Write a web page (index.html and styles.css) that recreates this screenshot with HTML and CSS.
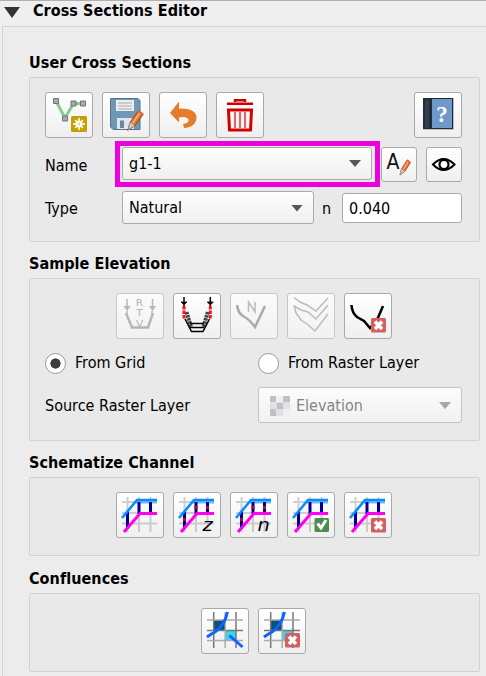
FILE: index.html
```html
<!DOCTYPE html>
<html lang="en">
<head>
<meta charset="utf-8">
<title>Cross Sections Editor</title>
<link rel="stylesheet" href="styles.css">
</head>
<body>
<svg class="defs" aria-hidden="true">
  <defs>
    <g id="pencil">
      <path d="M0 17 2 10 9 0 13 3 6 13Z" fill="#e07828" stroke="#a94e20"/>
      <path d="M4 11 10 2" stroke="#ffad70" stroke-width="1.5"/>
      <path d="M0 17 2 10 6 13Z" fill="#d9cec5" stroke="#8c8580" stroke-width=".7"/>
      <path d="M9 0 13 3" stroke="#d66b52" stroke-width="2"/>
    </g>
    <g id="delete">
      <rect x="27" y="25" width="15" height="14.500" rx="1.500" fill="#d35f5f"/>
      <path d="M31 28.500 38 36M38 28.500 31 36" stroke="#fff" stroke-width="3.500"/>
    </g>
    <g id="channel" fill="none">
      <path d="M11.500 5V40M23 5V40M34.500 5V40M6 10H41M6 21H41M6 31.500H41" stroke="#999" stroke-opacity=".45" stroke-width="2"/>
      <path d="M20 9.500H41" stroke="#72bdf0" stroke-width="4"/>
      <path d="M11.500 19V37M23 10V22M34.500 10V22" stroke="#000096" stroke-width="3"/>
      <path d="M6 26 21 8H41" stroke="#078cff" stroke-width="2.600"/>
      <path d="M8 40 24 21.500H41" stroke="#ff00f0" stroke-width="3"/>
    </g>
    <path id="samples" d="M11.500 26V29M23 14V17M34.500 14V17" stroke="#d00018" stroke-width="3"/>
    <g id="confluence" fill="none">
      <path d="M13 12H24V22H13Z" fill="#075477"/>
      <path d="M24 22H35V32H24Z" fill="#35d8ed"/>
      <path d="M12.700 4V40M6 22.500H42M35 4V40" stroke="#777" stroke-width="1.500"/>
      <path d="M24.200 4V40M6 12H42M6 32.500H42" stroke="#aaa" stroke-width="1.500"/>
      <path d="M26.500 4C25 11 21 19 14 24Q10 26 6 29" stroke="#0c63ff" stroke-width="3"/>
    </g>
  </defs>
</svg>
<main class="panel">
  <header class="panel-header"><span class="collapse"></span><h1>Cross Sections Editor</h1></header>
  <div class="panel-body">
    <section>
      <h2>User Cross Sections</h2>
      <div class="group user-group">
        <div class="toolbar">
          <button class="tool"><svg viewBox="1 1 46 44"><path d="M11 9 20 26 28.500 11.500H38" fill="none" stroke="#84cf8b" stroke-width="3"/><g fill="#aaa" stroke="#737373"><path d="M8.500 6.500h5v5h-5zM17.500 24h5v5h-5zM26 9h5v5h-5zM35.500 9h5v5h-5z"/></g><rect x="26" y="24" width="16" height="16" rx="1.500" fill="#c4a000"/><circle cx="34" cy="32" r="3.500" fill="#fff"/><path d="M34 26V38M28 32H40M30 28 38 36M38 28 30 36" stroke="#fff" stroke-width="1.500"/><circle cx="34" cy="32" r="1.300" fill="#f6d94c"/></svg></button>
          <button class="tool"><svg viewBox="1 1 46 44"><path d="M9 6.500H36L38 8.500V37.500H11L8.500 35V6.500Z" fill="#6f98b4" stroke="#507590"/><path d="M14 8H32V19H14Z" fill="#eee"/><path d="M16 11H30M16 14H30M16 17H30" stroke="#aaa"/><path d="M15 26H32V37H15Z" fill="#e3e6e8"/><path d="M18 28.500H22V36H18Z" fill="#6189a8"/><use href="#pencil" transform="translate(26 19) scale(1.150 1.120)"/></svg></button>
          <button class="tool"><svg viewBox="1 1 46 44"><path d="M11 21 20 9.500V16.500C32 16 38 20 37.500 26C37 32 33 35.500 25 36L24 32C30 31 31 28 28 26Q26 24.500 20 25.500V30.500Z" fill="#e47c2a"/></svg></button>
          <button class="tool"><svg viewBox="1 1 46 44"><path d="M11 11.700H37M19 10V8.200H29V10" fill="none" stroke="#d40000" stroke-width="2.500"/><path d="M12.500 18H35.500L34.500 38H13.500Z" fill="#fff" stroke="#d40000" stroke-width="3"/><path d="M19 20V36M24 20V36M29 20V36" stroke="#df6868" stroke-width="2.300"/></svg></button>
          <button class="tool help"><svg viewBox="1 1 46 44"><path d="M11 6H40V38H9Z" fill="#bbb"/><path d="M9 6H39V37H9Z" fill="#252a39"/><path d="M11 7.500H15V36H11Z" fill="#2d4050"/><path d="M18 7H38V36H18Z" fill="#6d9aca"/><text x="28" y="30" text-anchor="middle" class="question">?</text></svg></button>
        </div>
        <div class="name-row">
          <label>Name</label>
          <div class="highlight"><div class="combo name-combo">g1-1<i class="arrow"></i></div></div>
          <button class="small-tool rename"><svg viewBox="1 1 34 33"><text x="5.500" y="21.500" class="letter">A</text><use href="#pencil" transform="translate(19 13) scale(.8 .88)"/></svg></button>
          <button class="small-tool"><svg viewBox="1 1 34 33"><path d="M7 17.500Q17.500 6.500 28.500 17.500Q17.500 28.500 7 17.500Z" fill="#fff" stroke="#000" stroke-width="2"/><circle cx="18" cy="17.500" r="4.500" fill="#fff" stroke="#000" stroke-width="2.200"/></svg></button>
        </div>
        <div class="type-row"><label>Type</label><div class="combo type-combo">Natural<i class="arrow"></i></div><label class="n-label">n</label><input value="0.040" aria-label="n"></div>
      </div>
    </section>
    <section>
      <h2>Sample Elevation</h2>
      <div class="group sample-group">
        <div class="toolbar centered">
          <button class="tool disabled"><svg viewBox="1 1 46 44"><g fill="none" stroke="#b6b6b6"><path d="M11 6V17M36.500 6V17" stroke-width="1.500"/><path d="M7.500 13H14.500L11 18ZM33 13H40L36.500 18Z" fill="#b6b6b6" stroke="none"/><path d="M10 20 16 34.500H32L37 20" stroke-width="2.500"/><path d="M11 18V21M36 18V21" stroke="#dfbcbc" stroke-width="2"/></g><g class="rtv" text-anchor="middle"><text transform="translate(23.500 12.500) scale(1.300 1)">R</text><text transform="translate(23.500 23) scale(1.300 1)">T</text><text transform="translate(23.500 33.500) scale(1.300 1)">V</text></g></svg></button>
          <button class="tool"><svg viewBox="1 1 46 44"><g fill="none" stroke="#222"><path d="M11 4V14M37.300 4V14" stroke="#000" stroke-width="1.500"/><path d="M8 9H14L11 12ZM34.300 9H40.300L37.300 12Z" fill="#000"/><path d="M11 13V26M37.300 13V26" stroke="#f11" stroke-width="3" stroke-dasharray="3.500 1"/><path d="M13.500 19 18 34M34.800 19 30.500 34" stroke="#444" stroke-width="4" stroke-dasharray="2.500 .7"/><path d="M12 26 18.500 38.500H30L36.500 26M17 30.500H31M17 34.500H31" stroke="#000" stroke-width="1.500"/></g></svg></button>
          <button class="tool disabled"><svg viewBox="1 1 46 44"><path d="M7 12Q8 20 13 23Q19 26 25 34L35 13" fill="none" stroke="#aaa" stroke-width="2.500"/><path d="M18.500 19V9L25 19V9" fill="none" stroke="#bbb" stroke-width="1.500"/></svg></button>
          <button class="tool disabled"><svg viewBox="1 1 46 44"><path d="M7 4.500 13 9 20 12 29 18 41 5M7 13 14 17 21 19 29 26 41 12M7 12 9 20 14 27 20 31 28 38 41 21" fill="none" stroke="#bbb" stroke-width="1.500"/></svg></button>
          <button class="tool"><svg viewBox="1 1 46 44"><path d="M7.500 12Q8 20 13 24L20 28 26 35 33 27 39 13" fill="none" stroke="#000" stroke-width="2.500"/><use href="#delete"/></svg></button>
        </div>
        <div class="radio-row"><label class="radio"><span class="circle selected"></span>From Grid</label><label class="radio"><span class="circle"></span>From Raster Layer</label></div>
        <div class="source-row"><label>Source Raster Layer</label><div class="combo source-combo"><svg class="raster" viewBox="0 0 20 20"><path fill="#e1e1e5" d="M0 0H20V20H0Z"/><path fill="#c1c1c3" d="M0 0H6V6H0ZM13 0H20V6H13ZM7 7H13V13H7ZM0 13H6V20H0Z"/><path fill="#f0f0f2" d="M6 0H13V6H6ZM13 13H20V20H13Z"/></svg>Elevation<i class="arrow"></i></div></div>
      </div>
    </section>
    <section>
      <h2>Schematize Channel</h2>
      <div class="group button-group">
        <div class="toolbar centered">
          <button class="tool"><svg viewBox="1 1 46 44"><use href="#channel"/></svg></button>
          <button class="tool"><svg viewBox="1 1 46 44"><use href="#channel"/><use href="#samples"/><text class="variable" transform="translate(29.500 38.500) scale(1.200 1)">z</text></svg></button>
          <button class="tool"><svg viewBox="1 1 46 44"><use href="#channel"/><use href="#samples"/><text class="variable" transform="translate(27.500 38.500) scale(1.200 1)">n</text></svg></button>
          <button class="tool"><svg viewBox="1 1 46 44"><use href="#channel"/><rect x="27.500" y="26" width="14.500" height="14" rx="1.500" fill="#4b8b50"/><path d="M30.500 31.500 34 36 39 28" fill="none" stroke="#fff" stroke-width="3"/></svg></button>
          <button class="tool"><svg viewBox="1 1 46 44"><use href="#channel"/><use href="#delete" y="1"/></svg></button>
        </div>
      </div>
    </section>
    <section>
      <h2>Confluences</h2>
      <div class="group button-group">
        <div class="toolbar centered">
          <button class="tool"><svg viewBox="1 1 46 44"><use href="#confluence"/><path d="M28.500 27.500 41.500 39" stroke="#0c63ff" stroke-width="3"/></svg></button>
          <button class="tool"><svg viewBox="1 1 46 44"><use href="#confluence"/><use href="#delete"/></svg></button>
        </div>
      </div>
    </section>
  </div>
</main>
</body>
</html>
```
FILE: styles.css
```css
* { box-sizing: border-box; }
body { margin: 0; background: #efefef; color: #000; font: 16px/20px "DejaVu Sans Condensed", "DejaVu Sans", sans-serif; font-stretch: condensed; overflow: hidden; }
h1, h2 { margin: 0; font-size: 16px; line-height: 20px; font-weight: bold; letter-spacing: .06px; white-space: nowrap; }
button, input { font: inherit; margin: 0; padding: 0; }
button svg { display: block; width: 100%; height: 100%; }
.defs { display: block; width: 0; height: 0; }
.panel { height: 676px; border-top: 1px solid #b0b0b0; }
.panel-header { height: 25px; display: flex; align-items: flex-start; }
.panel-header h1 { margin-left: 13px; }
.collapse { width: 16px; height: 11px; margin: 6px 0 0 4px; background: #333; clip-path: polygon(0 0, 100% 0, 50% 100%); }
.panel-body { height: 650px; margin-left: 2px; border: solid #d5d5d5; border-width: 1px 0 0 1px; background: #ececec; padding: 0 6px 0 26px; }
section h2 { height: 36px; padding-top: 12px; }
section:first-child h2 { height: 50px; padding-top: 26px; }
.group { border: 1px solid #d2d2d2; border-radius: 2px; background: #e9e9e9; padding: 14px 17px 0 15px; width: 451px; }
.user-group { height: 165px; }
.sample-group { height: 163px; }
.button-group { height: 79px; }
section:nth-child(4) h2 { height: 37px; padding-top: 13px; }
.toolbar { display: flex; gap: 9px; height: 47px; }
.centered { justify-content: center; }
.tool { width: 48px; height: 46px; flex: none; border: 1px solid #a9a9a9; border-radius: 3px; background: linear-gradient(#fff, #efefef); }
.disabled { border-color: #c7c7c7; background: linear-gradient(#fbfbfb, #f1f1f1); }
.help { margin-left: auto; }
.question { font: bold 23px/1 "Liberation Serif", serif; fill: #fff; }
.rtv { font-size: 9px; fill: #b0b0b0; }
.variable { font-size: 18px; font-style: italic; fill: #000; }
.letter { font-size: 21px; fill: #111; }
.name-row { display: flex; height: 47px; align-items: flex-start; margin-top: 2px; }
.name-row > label { width: 70px; padding-top: 15px; }
.highlight { width: 265px; height: 46px; border: 5px solid #ed00dc; padding: 1px 3px 0 2px; }
.combo { position: relative; display: flex; align-items: center; border: 1px solid #aaa; border-radius: 3px; background: linear-gradient(#fff, #efefef); padding-left: 6px; }
.name-combo { height: 33px; }
.arrow { width: 12px; height: 7px; margin: 0 10px 0 auto; background: #575757; clip-path: polygon(0 0, 100% 0, 50% 100%); }
.small-tool { width: 36px; height: 35px; border: 1px solid #aaa; border-radius: 3px; background: linear-gradient(#fff, #efefef); margin-top: 6px; flex: none; }
.rename { margin: 6px 9px 0 1px; }
.type-row { display: flex; align-items: center; height: 33px; margin-top: 3px; }
.type-row > label { padding-top: 2px; }
.type-row > label:first-child { width: 77px; }
.type-combo { width: 192px; height: 33px; padding-top: 1px; }
.n-label { width: 28px; padding-left: 8px; }
input { width: 120px; height: 30px; border: 1px solid #aaa; border-radius: 3px; padding: 2px 0 0 6px; background: #fff; color: #000; outline: none; }
.radio-row { display: flex; margin-top: 12px; height: 22px; }
.radio { display: flex; flex: none; width: 213px; align-items: center; gap: 9px; white-space: nowrap; }
.circle { width: 21px; height: 21px; border: 1px solid #999; border-radius: 50%; background: #fff; flex: none; }
.selected { background: radial-gradient(circle, #3d3d3d 0 4.8px, #fff 5.4px); }
.source-row { display: flex; align-items: center; justify-content: space-between; height: 36px; margin-top: 13px; }
.source-row > label { padding-top: 2px; }
.source-combo { width: 204px; height: 36px; border-color: #c4c4c4; color: #858585; padding: 1px 0 0 11px; background: linear-gradient(#fcfcfc, #f1f1f1); }
.source-combo .arrow { background: #a6a6a6; }
.raster { width: 20px; height: 20px; margin-right: 6px; }
```
